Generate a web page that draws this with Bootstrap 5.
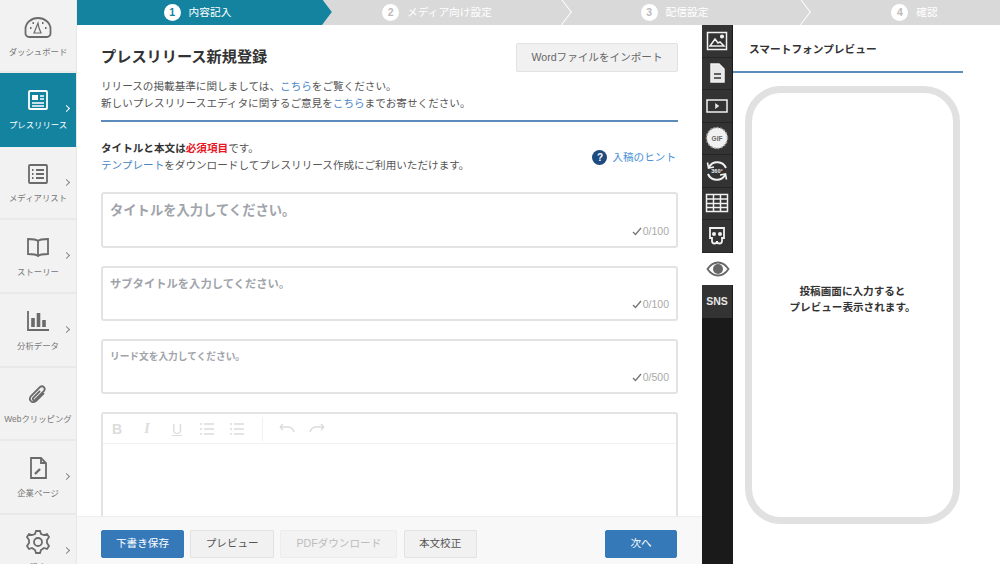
<!DOCTYPE html>
<html lang="ja">
<head>
<meta charset="UTF-8">
<title>プレスリリース新規登録</title>
<link href="https://cdn.jsdelivr.net/npm/bootstrap@5.3.3/dist/css/bootstrap.min.css" rel="stylesheet">
<style>
html, body { height: 100%; overflow: hidden; }
body { font-family: "Liberation Sans", "Noto Sans CJK JP", sans-serif; font-size: 10.6px; color: #555; background: #fff; }
a { color: #4a86c5; text-decoration: none; }

.app-shell { height: 564px; }
.side-menu { width: 77px; flex: none; background: #f2f2f2; border-right: 1px solid #e8e8e8; overflow: hidden; }
.side-item { position: relative; height: 73.7px; flex: none; padding-top: 12px; border-bottom: 2px solid #e9e9e9; color: #777; font-size: 8.4px; text-align: center; line-height: 12px; }
.side-item:first-child { height: 73px; }
.side-item svg.side-icon { display: block; width: 30px; height: 30px; margin: 0 auto 3.5px; fill: none; stroke: #6b6b6b; stroke-width: 1.8; }
.side-item.is-active { background: #14839f; color: #fff; border-bottom-color: #14839f; }
.side-item.is-active svg.side-icon { stroke: #fff; }
.side-arrow { position: absolute; left: 64px; top: 33px; width: 5px; height: 5px; border-top: 1px solid #888; border-right: 1px solid #888; transform: rotate(45deg); }
.is-active .side-arrow { border-color: #fff; }

.step-bar { height: 25px; flex: none; background: #d9d9d9; overflow: hidden; }
.step-item { position: relative; flex: none; color: #fff; font-size: 10.7px; }
.step-first { width: 243px; padding-right: 2px; }
.step-second { width: 240px; padding-right: 6px; }
.step-third { width: 239px; padding-right: 10px; }
.step-last { flex: 1; padding-left: 30px; }
.step-item::after { content: ""; position: absolute; right: -9px; top: -6px; width: 26px; height: 26px; margin-top: 5px; border-top: 1px solid #fff; border-right: 1px solid #fff; transform: rotate(45deg) skew(8deg, 8deg); }
.step-item.step-last::after { display: none; }
.step-item.is-current { background: #14839f; z-index: 1; }
.step-item.is-current::after { background: #14839f; border: 0; right: -9px; }
.step-num { width: 17px; height: 17px; border-radius: 50%; background: #fff; color: #bbb; font-size: 10.5px; font-weight: 700; line-height: 17px; text-align: center; }
.is-current .step-num { color: #14839f; }
.step-label { position: relative; z-index: 2; }

.work-row { flex: 1; min-height: 0; }
.main-col { width: 625px; flex: none; min-height: 0; }
.form-area { flex: 1; min-height: 0; overflow: hidden; padding: 18px 24px 0 24px; }
.page-title { font-size: 15.2px; font-weight: 700; color: #333; margin: 0; }
.btn-import { width: 162px; height: 29px; padding: 0; font-size: 10.6px; color: #666; background: #f1f1f1; border: 1px solid #e2e2e2; border-radius: 2px; }
.intro-text { margin-top: 6px; padding-bottom: 8px; border-bottom: 2px solid #5d8bbb; line-height: 17px; }
.note-row { margin-top: 18px; margin-bottom: 18px; line-height: 17px; }
.note-row b { color: #333; }
.note-row b.must { color: #e8171f; }
.hint-link { font-size: 10.6px; color: #4a92d6; margin-right: 2px; gap: 5px; }
.hint-mark { width: 15px; height: 15px; border-radius: 50%; background: #1f4c80; color: #fff; font-size: 10px; font-weight: 700; text-align: center; line-height: 15px; }

.text-box { position: relative; border: 2px solid #e3e3e3; border-radius: 3px; height: 55px; margin-bottom: 18px; padding: 7px; color: #a0a4aa; font-weight: 700; line-height: 18px; }
.text-box.for-title { height: 56px; font-size: 13.3px; padding-top: 8px; }
.text-box.for-sub { font-size: 11.3px; padding-top: 7px; }
.text-box.for-lead { font-size: 9.7px; }
.char-count { position: absolute; right: 7px; bottom: 9px; gap: 1px; font-size: 10.5px; font-weight: 400; line-height: 12px; color: #a9a9a9; }
.char-count svg { width: 10px; height: 9px; fill: none; stroke: #777; stroke-width: 1.4; }

.editor-box { border: 2px solid #e3e3e3; border-bottom: 0; border-radius: 3px 3px 0 0; height: 120px; }
.editor-tools { height: 30px; padding: 0 6px; gap: 14px; border-bottom: 1px solid #f1f1f1; }
.editor-tools svg { width: 16px; height: 16px; fill: none; stroke: #dcdcdc; stroke-width: 1.5; }
.tool-letter { width: 16px; font-size: 14px; line-height: 16px; color: #dcdcdc; text-align: center; }
.tool-serif { font-family: "Liberation Serif", serif; }
.tool-gap { width: 1px; height: 24px; background: #f1f1f1; margin: 0 2px 0 3px; }

.action-bar { height: 48px; flex: none; padding: 6px 25px 0 24px; gap: 6.2px; background: #f8f8f8; border-top: 1px solid #eee; }
.act-btn { height: 28px; padding: 0; font-size: 10.6px; color: #555; background: #f1f1f1; border: 1px solid #e2e2e2; border-radius: 2px; }
.act-btn.is-blue { background: #3679b9; border-color: #3679b9; color: #fff; }
.act-btn:disabled { background: #f3f3f3; border-color: #ececec; color: #bbb; opacity: 1; }
.act-draft { width: 83px; }
.act-preview { width: 84px; }
.act-pdf { width: 117px; }
.act-proof { width: 73px; }
.act-next { width: 72px; }

.tool-rail { width: 31px; flex: none; background: #1a1a1a; padding-right: 1px; }
.rail-btn { height: 32.5px; flex: none; background: #333; border-bottom: 1px solid #252525; }
.rail-btn svg { width: 24px; height: 24px; fill: none; stroke: #f1f1f1; stroke-width: 1.5; }
.rail-btn.is-on { background: #fff; border: 0; margin-right: -1px; }
.rail-btn.is-on svg { stroke: #666; }
.rail-sns { color: #e6e6e6; font-size: 10.5px; font-weight: 700; border: 0; padding-top: 1px; }

.preview-col { flex: 1; min-width: 0; }
.preview-head { width: 230px; height: 48px; flex: none; padding-left: 16px; padding-top: 16px; border-bottom: 2px solid #5d8bbb; font-size: 10.7px; font-weight: 700; color: #333; line-height: 16px; }
.phone-frame { width: 215px; height: 438px; margin: 13px 0 0 12px; padding-bottom: 12px; border: 7px solid #e1e1e1; border-radius: 36px; color: #333; font-weight: 700; line-height: 16px; font-size: 10.6px; text-align: center; }
</style>
</head>
<body>
<div class="app-shell d-flex">

  <nav class="side-menu d-flex flex-column">
    <div class="side-item">
      <svg class="side-icon" viewBox="0 0 30 30"><path d="M6 25a3.500 3.500 0 0 1-3.500-3.500V17a12.500 11 0 0 1 25 0v4.500A3.500 3.500 0 0 1 24 25z"/><path d="M11 21h7l-2-5-1-5-2 5z" stroke-width="1.200"/><path d="M7 16h1.500M22 16h1.500M9.500 11h1.500M19 11h1.500" stroke-width="2"/></svg>
      ダッシュボード
    </div>
    <div class="side-item is-active">
      <svg class="side-icon" viewBox="0 0 30 30"><rect x="6" y="6" width="18" height="18" rx="1"/><rect x="9" y="10" width="6" height="5" fill="#fff" stroke="none"/><path d="M17 11h4M17 14h4M9 18h12M9 21h12" stroke-width="1.400"/></svg>
      プレスリリース
      <span class="side-arrow"></span>
    </div>
    <div class="side-item">
      <svg class="side-icon" viewBox="0 0 30 30"><rect x="6" y="6" width="18" height="18" rx="1"/><path d="M13 11h8M13 15h8M13 19h8"/><path d="M9 11h1.500M9 15h1.500M9 19h1.500" stroke-width="2"/></svg>
      メディアリスト
      <span class="side-arrow"></span>
    </div>
    <div class="side-item">
      <svg class="side-icon" viewBox="0 0 30 30"><path d="M15 9c-2-2-6-2-10-2v15c4 0 8 0 10 2 2-2 6-2 10-2V7c-4 0-8 0-10 2zM15 9v15"/></svg>
      ストーリー
      <span class="side-arrow"></span>
    </div>
    <div class="side-item">
      <svg class="side-icon" viewBox="0 0 30 30"><path d="M5 5v19h21"/><path d="M10 21v-9M15.500 21V7M21 21v-7" stroke-width="3.600"/></svg>
      分析データ
      <span class="side-arrow"></span>
    </div>
    <div class="side-item">
      <svg class="side-icon" viewBox="0 0 30 30"><path d="M21 13l-8 8c-4 3-8-1-5-5l9-9c3-2 6 1 4 4l-9 9c-1 1-3 0-2-2l7-7"/></svg>
      Webクリッピング
    </div>
    <div class="side-item">
      <svg class="side-icon" viewBox="0 0 30 30"><path d="M8 5h10l5 5v15H8z"/><path d="M18 5v5h5"/><path d="M12 21l5-5" stroke-width="2.400"/></svg>
      企業ページ
      <span class="side-arrow"></span>
    </div>
    <div class="side-item">
      <svg class="side-icon" viewBox="0 0 30 30"><circle cx="15" cy="15" r="4"/><path d="M13 4h4l1 3 3 1 3-1 2 3-2 3v3l2 3-2 3-3-1-3 2-1 3h-4l-1-3-3-2-3 1-2-3 2-3v-3L4 10l2-3 3 1 3-1z"/></svg>
      設定
      <span class="side-arrow"></span>
    </div>
  </nav>

  <div class="flex-grow-1 d-flex flex-column min-w-0">
    <div class="step-bar d-flex">
      <div class="step-item step-first is-current d-flex align-items-center justify-content-center gap-2"><span class="step-num step-label">1</span><span class="step-label">内容記入</span></div>
      <div class="step-item step-second d-flex align-items-center justify-content-center gap-2"><span class="step-num">2</span><span>メディア向け設定</span></div>
      <div class="step-item step-third d-flex align-items-center justify-content-center gap-2"><span class="step-num">3</span><span>配信設定</span></div>
      <div class="step-item step-last d-flex align-items-center justify-content-center gap-2"><span class="step-num">4</span><span>確認</span></div>
    </div>

    <div class="work-row d-flex">
      <div class="main-col d-flex flex-column">
        <div class="form-area">
          <div class="d-flex justify-content-between align-items-center">
            <h1 class="page-title">プレスリリース新規登録</h1>
            <button type="button" class="btn btn-import">Wordファイルをインポート</button>
          </div>
          <div class="intro-text">
            リリースの掲載基準に関しましては、<a href="#">こちら</a>をご覧ください。<br>
            新しいプレスリリースエディタに関するご意見を<a href="#">こちら</a>までお寄せください。
          </div>
          <div class="note-row d-flex justify-content-between align-items-center">
            <div>
              <b>タイトルと本文は</b><b class="must">必須項目</b>です。<br>
              <a href="#">テンプレート</a>をダウンロードしてプレスリリース作成にご利用いただけます。
            </div>
            <a href="#" class="hint-link d-flex align-items-center"><span class="hint-mark">?</span>入稿のヒント</a>
          </div>
          <div class="text-box for-title">タイトルを入力してください。
            <span class="char-count d-inline-flex align-items-center"><svg viewBox="0 0 10 9"><path d="M1 5l2.500 2.500L9 1"/></svg>0/100</span>
          </div>
          <div class="text-box for-sub">サブタイトルを入力してください。
            <span class="char-count d-inline-flex align-items-center"><svg viewBox="0 0 10 9"><path d="M1 5l2.500 2.500L9 1"/></svg>0/100</span>
          </div>
          <div class="text-box for-lead">リード文を入力してください。
            <span class="char-count d-inline-flex align-items-center"><svg viewBox="0 0 10 9"><path d="M1 5l2.500 2.500L9 1"/></svg>0/500</span>
          </div>
          <div class="editor-box">
            <div class="editor-tools d-flex align-items-center">
              <span class="tool-letter fw-bold">B</span>
              <span class="tool-letter tool-serif fst-italic fw-bold">I</span>
              <span class="tool-letter text-decoration-underline">U</span>
              <svg viewBox="0 0 16 16"><path d="M5 3h10M5 8h10M5 13h10M1 3h2M1 8h2M1 13h2"/></svg>
              <svg viewBox="0 0 16 16"><path d="M5 3h10M5 8h10M5 13h10M1 3h2M1 8h2M1 13h2"/></svg>
              <span class="tool-gap"></span>
              <svg viewBox="0 0 16 16"><path d="M1 6l3 3M1 6l3-3M1 6h8c3 0 5 2 6 5"/></svg>
              <svg viewBox="0 0 16 16"><path d="M15 6l-3 3M15 6l-3-3M15 6H7c-3 0-5 2-6 5"/></svg>
            </div>
          </div>
        </div>
        <div class="action-bar d-flex align-items-center">
          <button type="button" class="btn act-btn is-blue act-draft">下書き保存</button>
          <button type="button" class="btn act-btn act-preview">プレビュー</button>
          <button type="button" class="btn act-btn act-pdf" disabled>PDFダウンロード</button>
          <button type="button" class="btn act-btn act-proof">本文校正</button>
          <button type="button" class="btn act-btn is-blue act-next ms-auto">次へ</button>
        </div>
      </div>

      <div class="tool-rail d-flex flex-column">
        <div class="rail-btn d-flex align-items-center justify-content-center"><svg viewBox="0 0 24 24"><rect x="2.500" y="3.500" width="19" height="17"/><path d="M5 17l5-7 3 4 2-1 4 4z"/><circle cx="17" cy="7.500" r="1.300" fill="#f1f1f1"/></svg></div>
        <div class="rail-btn d-flex align-items-center justify-content-center"><svg viewBox="0 0 24 24"><path d="M6 3h8l5 5v13H6z" fill="#e8e8e8"/><path d="M9 13h7M9 17h7" stroke="#333"/></svg></div>
        <div class="rail-btn d-flex align-items-center justify-content-center"><svg viewBox="0 0 24 24"><rect x="2" y="6" width="20" height="12"/><path d="M11 10.500l2 1.500-2 1.500z"/></svg></div>
        <div class="rail-btn d-flex align-items-center justify-content-center"><svg viewBox="0 0 24 24"><circle cx="12" cy="12" r="10.500" fill="#f1f1f1" stroke="#999" stroke-dasharray="2 1.500"/><text x="12" y="14.500" text-anchor="middle" font-size="6.500" font-weight="700" fill="#666" stroke="none">GIF</text></svg></div>
        <div class="rail-btn d-flex align-items-center justify-content-center"><svg viewBox="0 0 24 24"><path d="M4 8a9.500 9.500 0 0 1 17 1M20 16a9.500 9.500 0 0 1-17-1" stroke-width="2"/><path d="M2.500 3.500l1 5.500 5.500-1M21.500 20.500l-1-5.500-5.500 1" stroke-width="1.600"/><text x="12" y="14" text-anchor="middle" font-size="5.500" font-weight="700" fill="#f1f1f1" stroke="none">360°</text></svg></div>
        <div class="rail-btn d-flex align-items-center justify-content-center"><svg viewBox="0 0 24 24"><rect x="1.500" y="3.500" width="21" height="17" fill="#333"/><path d="M1.500 8h21M1.500 12.500h21M1.500 16.500h21M8.500 3.500v17M15.500 3.500v17"/></svg></div>
        <div class="rail-btn d-flex align-items-center justify-content-center"><svg viewBox="0 0 24 24"><path d="M5 4h14v10h-2v3a2.500 2.500 0 0 1-5 0 2.500 2.500 0 0 1-5 0v-3H5z" fill="#333" stroke-width="1.800"/><circle cx="9" cy="10" r="2" fill="#f1f1f1" stroke="none"/><circle cx="15" cy="10" r="2" fill="#f1f1f1" stroke="none"/></svg></div>
        <div class="rail-btn is-on d-flex align-items-center justify-content-center"><svg viewBox="0 0 24 24"><path d="M1.500 12c3-4.500 6.500-6.500 10.500-6.500s7.500 2 10.500 6.500c-3 4.500-6.500 6.500-10.500 6.500S4.500 16.500 1.500 12z" stroke-width="1.800"/><circle cx="12" cy="12" r="5" fill="#666" stroke="none"/></svg></div>
        <div class="rail-btn rail-sns d-flex align-items-center justify-content-center">SNS</div>
      </div>

      <div class="preview-col d-flex flex-column">
        <div class="preview-head">スマートフォンプレビュー</div>
        <div class="phone-frame d-flex align-items-center justify-content-center">
          <div class="phone-msg">投稿画面に入力すると<br>プレビュー表示されます。</div>
        </div>
      </div>
    </div>
  </div>
</div>
<script src="https://cdn.jsdelivr.net/npm/bootstrap@5.3.3/dist/js/bootstrap.bundle.min.js"></script>
</body>
</html>
